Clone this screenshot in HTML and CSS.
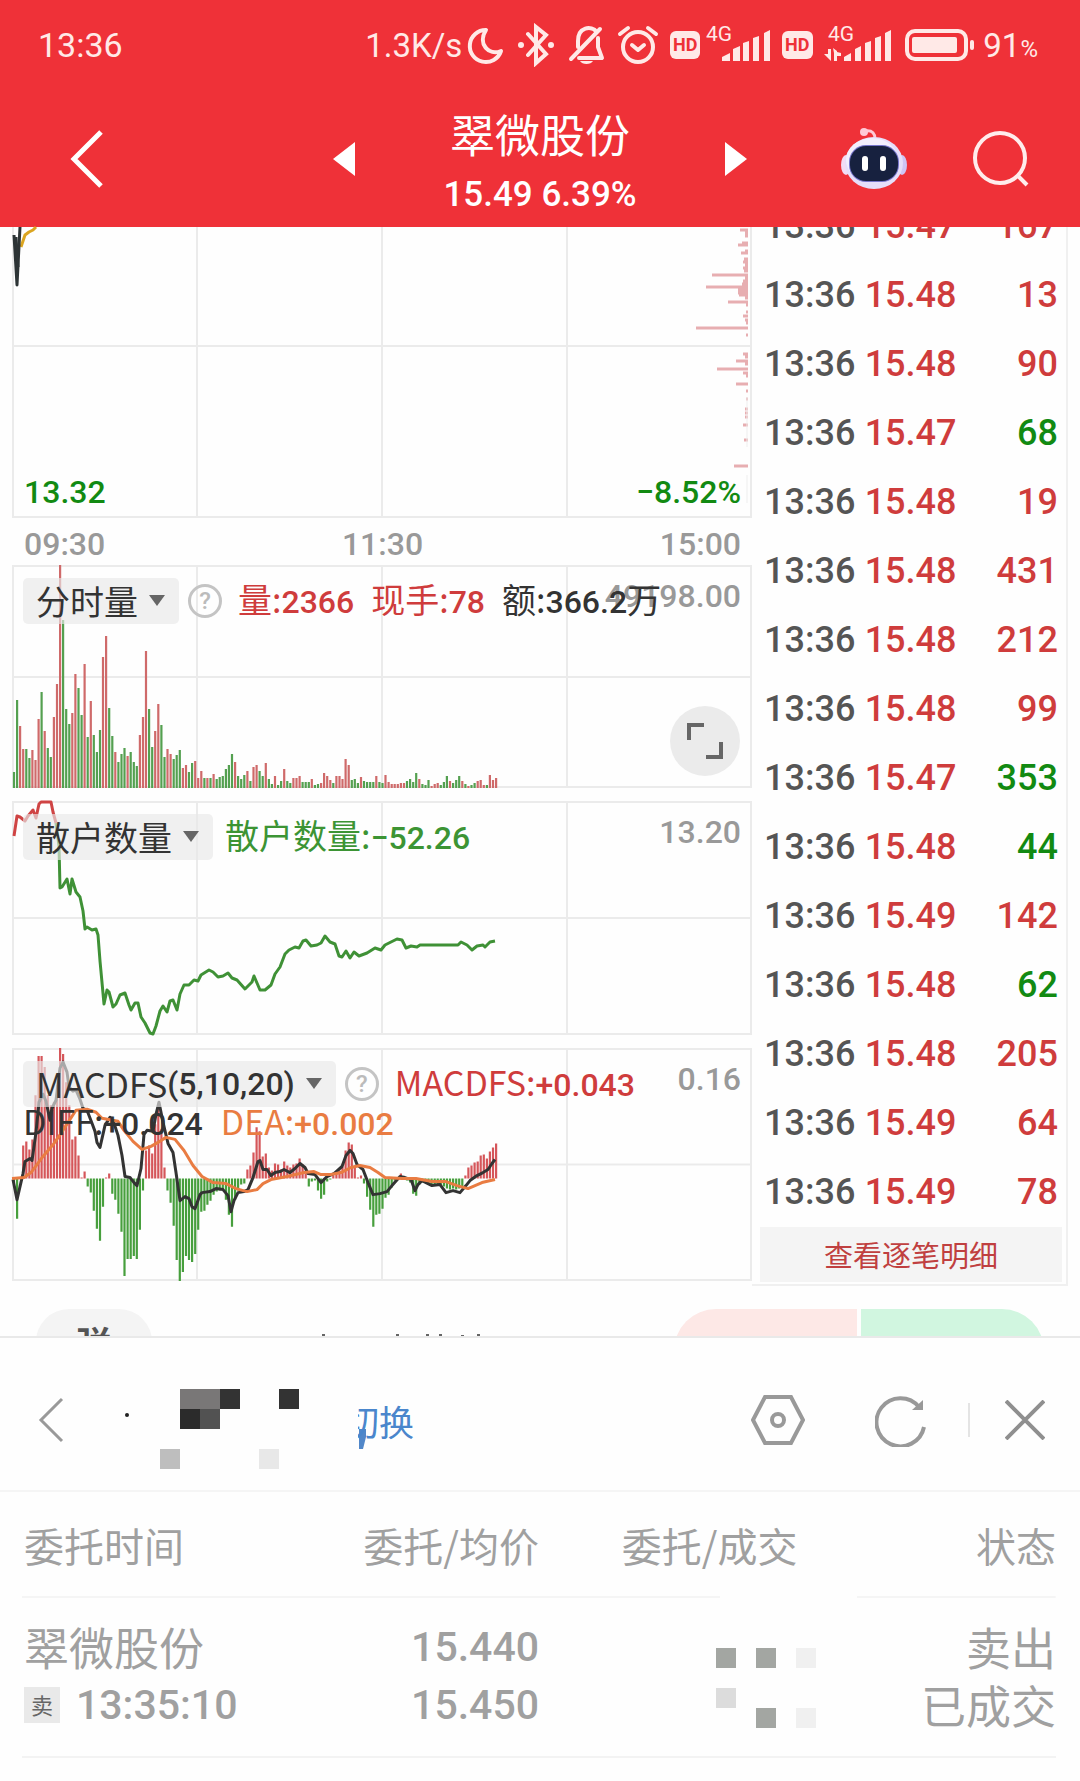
FILE: index.html
```html
<!DOCTYPE html>
<html lang="zh-CN">
<head>
<meta charset="utf-8">
<meta name="viewport" content="width=device-width, initial-scale=1">
<title>翠微股份</title>
<link rel="stylesheet" href="styles.css">
</head>
<body>
<header class="top">
  <div class="status">
    <span class="clock">13:36</span>
    <span class="speed">1.3K/s</span>
    <svg class="status-icons" width="440" height="44" viewBox="468 22 440 44" fill="none" stroke="#ffe9e7" stroke-width="4" stroke-linejoin="round" stroke-linecap="round" aria-hidden="true">
      <path d="M488 29a16 16 0 1 0 15 21c-12 5-24-7-15-21z"/>
      <path d="M530 33l18 20-10 9V26l10 8-18 20" stroke-linejoin="miter"/>
      <circle cx="523" cy="44" r="3" fill="#ffe9e7" stroke="none"/><circle cx="553" cy="44" r="3" fill="#ffe9e7" stroke="none"/>
      <path d="M573 58L602 28M580 46v-6c0-14 13-16 19-9M600 37v9l4 11h-23"/>
      <path d="M582 60h13c-2 4-11 4-13 0z" fill="#ffe9e7" stroke="none"/>
      <circle cx="640" cy="46" r="15"/><path d="M634 44l6 5 6-5M622 33l8-6M658 33l-8-6"/>
      <g fill="#ffe9e7" stroke="none">
        <rect x="672" y="30" width="30" height="28" rx="6"/><rect x="784" y="30" width="31" height="28" rx="6"/>
        <path d="M724 60v-4l8-4v8zM735 48l7-3v15h-7zM745 42l6-2v20h-6zM755 37l6-2v25h-6zM766 32l6-3v31h-6z"/>
        <path d="M846 60v-4l7-4v8zM857 48l6-3v15h-6zM867 42l6-2v20h-6zM877 37l6-2v25h-6zM887 32l6-3v31h-6z"/>
        <path d="M826 53h4v-5h3v12zM835 47l4 3v10h-3V52zM839 51l4 1v3h-4z"/>
      </g>
      <g stroke="none" class="tag-text"><text x="675" y="50" fill="#ee3138">HD</text><text x="787" y="50" fill="#ee3138">HD</text></g>
      <g stroke="none" class="net-text" fill="#ffe9e7"><text x="708" y="40">4G</text><text x="830" y="40">4G</text></g>
    </svg>
    <svg width="70" height="32" viewBox="0 0 70 32" aria-hidden="true"><rect x="2" y="2" width="59" height="28" rx="8" fill="none" stroke="#ffe9e7" stroke-width="4"/><rect x="7" y="8" width="45" height="16" rx="2" fill="#ffe9e7"/><rect x="65" y="11" width="4" height="10" rx="2" fill="#ffe9e7"/></svg>
    <span class="battery">91<small>%</small></span>
  </div>
  <nav class="titlebar">
    <button class="icon-btn back" aria-label="返回"><svg width="36" height="60" viewBox="0 0 36 60"><path d="M32 3L5 30l27 27" fill="none" stroke="#fff" stroke-width="5"/></svg></button>
    <div class="stock">
      <button class="icon-btn" aria-label="上一只"><svg width="22" height="34" viewBox="0 0 22 34"><path d="M22 0v34L0 17z" fill="#fff"/></svg></button>
      <div class="stock-name"><h1>翠微股份</h1><p class="num">15.49 6.39%</p></div>
      <button class="icon-btn" aria-label="下一只"><svg width="22" height="34" viewBox="0 0 22 34"><path d="M0 0v34l22-17z" fill="#fff"/></svg></button>
    </div>
    <div class="tools">
      <button class="icon-btn" aria-label="智能助手"><svg width="68" height="64" viewBox="0 0 68 64">
        <path d="M25 4c8-1 10 3 10 8" fill="none" stroke="#ffc9d6" stroke-width="3"/><circle cx="24" cy="5" r="4" fill="#ffc9d6"/>
        <ellipse cx="6" cy="38" rx="5" ry="10" fill="#f3dcf4"/><ellipse cx="62" cy="38" rx="5" ry="10" fill="#cfc4f5"/>
        <ellipse cx="34" cy="36" rx="29" ry="26" fill="#e6defa"/><ellipse cx="32" cy="33" rx="26" ry="22" fill="#f3effd"/>
        <rect x="9" y="18" width="50" height="37" rx="17" fill="#7473c9"/><rect x="10" y="19" width="48" height="35" rx="16" fill="#17213f"/>
        <rect x="22" y="29" width="6" height="15" rx="3" fill="#fff"/><rect x="40" y="29" width="6" height="15" rx="3" fill="#fff"/></svg></button>
      <button class="icon-btn" aria-label="搜索"><svg width="58" height="58" viewBox="0 0 58 58" fill="none" stroke="#ffecec" stroke-width="4"><circle cx="28" cy="28" r="25"/><path d="M45 45l10 10"/></svg></button>
    </div>
  </nav>
</header>

<main class="market">
  <section class="charts" aria-label="分时图">
    <div class="panel price-panel">
      <svg class="plot" id="price" viewBox="0 0 740 291" preserveAspectRatio="none"></svg>
      <div class="range num"><span>13.32</span><span>−8.52%</span></div>
    </div>
    <div class="axis num"><span>09:30</span><span>11:30</span><span>15:00</span></div>
    <div class="panel volume-panel">
      <svg class="plot" id="volume" viewBox="0 0 740 223" preserveAspectRatio="none"></svg>
      <span class="scale num">49198.00</span>
      <div class="legend">
        <button class="picker">分时量<i class="caret"></i></button>
        <button class="help" aria-label="说明">?</button>
        <span class="reads"><span class="up">量:<b>2366</b></span><span class="up">现手:<b>78</b></span><span>额:<b>366.2</b>万</span></span>
      </div>
      <button class="expand" aria-label="全屏"><svg width="36" height="36" viewBox="0 0 36 36" fill="none" stroke="#666" stroke-width="4"><path d="M2 17V2h15M34 19v15H19"/></svg></button>
    </div>
    <div class="panel retail-panel">
      <svg class="plot" id="retail" viewBox="0 0 740 234" preserveAspectRatio="none"></svg>
      <span class="scale num">13.20</span>
      <div class="legend">
        <button class="picker">散户数量<i class="caret"></i></button>
        <span class="down">散户数量:<b>−52.26</b></span>
      </div>
    </div>
    <div class="panel macd-panel">
      <svg class="plot" id="macd" viewBox="0 0 740 232" preserveAspectRatio="none"></svg>
      <span class="scale num">0.16</span>
      <div class="legend">
        <button class="picker">MACDFS<b>(5,10,20)</b><i class="caret"></i></button>
        <button class="help" aria-label="说明">?</button>
        <span class="up">MACDFS:<b>+0.043</b></span>
        <span class="second"><span>DIFF:<b>+0.024</b></span><span class="dea">DEA:<b>+0.002</b></span></span>
      </div>
    </div>
  </section>

  <section class="ticks" aria-label="成交明细">
    <div class="tick-window">
    <table class="num">
      <tr><td>13:36</td><td>15.47</td><td class="up">167</td></tr>
      <tr><td>13:36</td><td>15.48</td><td class="up">13</td></tr>
      <tr><td>13:36</td><td>15.48</td><td class="up">90</td></tr>
      <tr><td>13:36</td><td>15.47</td><td class="down">68</td></tr>
      <tr><td>13:36</td><td>15.48</td><td class="up">19</td></tr>
      <tr><td>13:36</td><td>15.48</td><td class="up">431</td></tr>
      <tr><td>13:36</td><td>15.48</td><td class="up">212</td></tr>
      <tr><td>13:36</td><td>15.48</td><td class="up">99</td></tr>
      <tr><td>13:36</td><td>15.47</td><td class="down">353</td></tr>
      <tr><td>13:36</td><td>15.48</td><td class="down">44</td></tr>
      <tr><td>13:36</td><td>15.49</td><td class="up">142</td></tr>
      <tr><td>13:36</td><td>15.48</td><td class="down">62</td></tr>
      <tr><td>13:36</td><td>15.48</td><td class="up">205</td></tr>
      <tr><td>13:36</td><td>15.49</td><td class="up">64</td></tr>
      <tr><td>13:36</td><td>15.49</td><td class="up">78</td></tr>
    </table>
    </div>
    <a class="more" href="#ticks">查看逐笔明细</a>
  </section>
</main>

<div class="chat">
  <button class="danmu">弹</button>
  <svg class="hint" width="170" height="4" viewBox="0 0 170 4" fill="#666" aria-hidden="true"><path d="M8 2h3v2H8zM82 2h3v2h-3zM112 2h3v2h-3zM125 2h3v2h-3zM147 3h3v1h-3zM163 2h3v2h-3z"/></svg>
  <div class="vote"><button class="bull" aria-label="看涨"></button><button class="bear" aria-label="看跌"></button></div>
</div>

<section class="sheet">
  <div class="sheet-bar">
    <button class="icon-btn" aria-label="返回"><svg width="26" height="46" viewBox="0 0 26 46"><path d="M24 2L3 23l21 21" fill="none" stroke="#999" stroke-width="3"/></svg></button>
    <svg class="masked" width="246" height="80" viewBox="0 0 246 80" aria-hidden="true">
      <circle cx="6" cy="26" r="2" fill="#222"/>
      <path d="M59 0h40v20H59z" fill="#797777"/><path d="M99 0h20v20H99zM158 0h20v20h-20z" fill="#333"/>
      <path d="M59 20h20v20H59z" fill="#2b2b2b"/><path d="M79 20h20v20H79z" fill="#525252"/>
      <path d="M39 60h20v20H39z" fill="#bebebe"/><path d="M138 60h20v20h-20z" fill="#e8e8e8"/>
      <path d="M238 40h7v8l-3 12h-4z" fill="#5187c9"/>
    </svg>
    <button class="switch" aria-label="切换"><span>切换</span></button>
    <div class="sheet-tools">
      <button class="icon-btn" aria-label="设置"><svg width="54" height="50" viewBox="0 0 54 50" fill="none" stroke="#999" stroke-width="4"><path d="M14 2h26l12 23-12 23H14L2 25z"/><circle cx="27" cy="25" r="6"/></svg></button>
      <button class="icon-btn refresh" aria-label="刷新"><svg width="52" height="54" viewBox="0 0 52 54"><path d="M44 14A24 24 0 1 0 49 34" fill="none" stroke="#999" stroke-width="4"/><path d="M37 17l11-10v10z" fill="#999"/></svg></button>
      <span class="divider"></span>
      <button class="icon-btn" aria-label="关闭"><svg width="40" height="40" viewBox="0 0 40 40"><path d="M1 1l38 38M39 1L1 39" stroke="#8f8f8f" stroke-width="4"/></svg></button>
    </div>
  </div>
  <table class="orders">
    <thead><tr><th>委托时间</th><th>委托/均价</th><th class="fade-out">委托/成交</th><th class="fade-in">状态</th></tr></thead>
    <tbody><tr>
      <td>翠微股份<br><span class="when"><span class="side">卖</span><span class="num">13:35:10</span></span></td>
      <td class="num">15.440<br>15.450</td>
      <td><svg class="masked-qty" width="100" height="80" viewBox="0 0 100 80" aria-hidden="true"><path d="M0 0h20v20H0zM40 0h20v20H40zM40 60h20v20H40z" fill="#a3a6a2"/><path d="M0 40h20v20H0z" fill="#dcdcdc"/><path d="M80 0h20v20H80zM80 60h20v20H80z" fill="#f0f0f0"/></svg></td>
      <td>卖出<br>已成交</td>
    </tr></tbody>
  </table>
</section>
<script src="chart.js"></script>
</body>
</html>
```
FILE: styles.css
```css
* { box-sizing: border-box; }
body { margin: 0; min-height: 100vh; background: #fefefe; color: #333; font-family: "Noto Sans CJK SC", sans-serif; font-size: 34px; }
button { font: inherit; color: inherit; border: 0; padding: 0; background: none; }
h1, p { margin: 0; font-weight: 400; }
svg { display: block; }
.num, b { font-family: Roboto, sans-serif; font-weight: 500; }
.up { color: #cf3c3c; }
.down { color: #128a12; }
.icon-btn { display: grid; place-items: center; }

.top { background: #ef3138; color: #fff; height: 227px; }
.status { display: flex; align-items: center; height: 90px; padding: 0 42px 0 38px; color: #ffe9e7; font-family: Roboto, sans-serif; }
.speed { margin-left: auto; font-size: 33px; }
.status-icons { margin-left: 4px; margin-right: -1px; }
.tag-text { font: 700 18px Roboto, sans-serif; }
.net-text { font: 400 21px Roboto, sans-serif; }
.battery { margin-left: 8px; font-size: 33px; }
.battery small { font-size: 24px; }
.titlebar { display: grid; grid-template-columns: 1fr auto 1fr; align-items: center; height: 137px; }
.back { justify-self: start; margin-left: 69px; }
.stock { display: flex; align-items: center; gap: 88px; }
.stock-name { padding-top: 8px; text-align: center; }
.stock h1 { font-size: 45px; line-height: 64px; }
.stock p { font-size: 35px; line-height: 58px; }
.tools { display: flex; justify-content: flex-end; align-items: center; gap: 64px; padding-right: 50px; }

.market { display: grid; grid-template-columns: minmax(0, 1fr) 316px; padding: 0 12px; }
.charts { display: flex; flex-direction: column; }
.panel { display: grid; }
.panel > * { grid-area: 1 / 1; }
.plot { width: 100%; height: 100%; overflow: visible; }
.price-panel { height: 291px; }
.volume-panel { height: 223px; }
.retail-panel { height: 234px; margin: 13px 0; }
.macd-panel { height: 233px; }
.range { align-self: end; display: flex; justify-content: space-between; padding: 0 11px 7px 12px; font-size: 32px; line-height: 38px; color: #128a12; }
.axis { display: grid; grid-template-columns: 1fr 1fr 1fr; height: 47px; padding: 0 11px 0 12px; line-height: 52px; font-size: 32px; color: #999; }
.axis span:nth-child(2) { text-align: center; }
.axis span:nth-child(3) { text-align: right; }
.scale { justify-self: end; padding: 11px 11px 0 0; font-size: 32px; line-height: 40px; color: #999; }
.legend { display: flex; flex-wrap: wrap; align-items: center; align-content: flex-start; padding: 12px 0 0 11px; line-height: 44px; color: #333; }
.picker { display: flex; align-items: center; height: 46px; padding: 0 14px 0 13px; border-radius: 5px; background: rgba(232, 232, 232, .65); }
.caret { margin-left: 11px; border: 8px solid transparent; border-top: 11px solid #666; border-bottom: 0; }
.help { width: 34px; height: 34px; margin: 0 16px 0 9px; border: 3px solid #c4c4c4; border-radius: 50%; font: 500 24px/28px Roboto, sans-serif; color: #bbb; }
.legend b { font-size: 32px; }
.reads { display: flex; gap: 17px; }
.legend .down { margin-left: 12px; color: #3c9434; }
.second { flex-basis: 100%; display: flex; gap: 18px; line-height: 28px; }
.dea { color: #e97c42; }
.expand { align-self: end; justify-self: end; display: grid; place-items: center; width: 70px; height: 70px; margin: 0 12px 12px 0; border-radius: 50%; background: #ebebeb; }

.ticks { border-right: 2px solid #f0f0f0; border-bottom: 2px solid #f0f0f0; padding: 0 4px 2px 8px; }
.tick-window { overflow: hidden; }
.ticks table { width: 100%; margin-top: -35px; border-collapse: collapse; table-layout: fixed; font-size: 36px; color: #555; }
.ticks td { height: 69px; padding: 0 0 0 4px; line-height: 69px; }
.ticks td:nth-child(2) { color: #cf3c3c; }
.ticks td:nth-child(3) { text-align: right; padding-right: 4px; }
.more { display: block; line-height: 55px; background: #f4f4f4; text-align: center; text-decoration: none; font-size: 29px; color: #c04040; }

.chat { display: flex; align-items: flex-start; height: 50px; padding: 23px 36px 0; overflow: hidden; }
.danmu { width: 116px; height: 66px; border-radius: 50px; background: #f4f4f4; color: #555; font-size: 36px; line-height: 66px; font-weight: 700; }
.hint { margin: 23px auto 0 162px; }
.vote { display: flex; gap: 4px; width: 370px; }
.vote button { height: 84px; }
.bull { flex: 1; background: #fde8e6; border-radius: 42px 0 0 42px; }
.bear { flex: 1; background: #d1f6e0; border-radius: 0 42px 42px 0; }

.sheet { border-top: 2px solid #e9e9e9; background: #fefefe; }
.sheet-bar { display: flex; align-items: center; height: 154px; padding: 12px 35px 0 38px; border-bottom: 2px solid #f5f5f5; }
.masked { margin: 18px 0 0 57px; }
.switch { display: flex; justify-content: flex-end; width: 56px; margin-left: -9px; overflow: hidden; color: #4a86cc; font-size: 35px; }
.switch span { flex: none; }
.sheet-tools { display: flex; align-items: center; margin-left: auto; }
.refresh { margin: 0 41px 0 70px; }
.divider { width: 2px; height: 34px; margin-right: 35px; background: #e4e4e4; }
.orders { width: calc(100% - 46px); margin: 0 24px 0 22px; border-collapse: collapse; table-layout: fixed; color: #a0a0a0; text-align: right; }
.orders th { padding: 24px 0; font-size: 40px; font-weight: 400; line-height: 58px; background: linear-gradient(#f5f5f5, #f5f5f5) bottom left / 100% 2px no-repeat; }
.orders th:first-child, .orders td:first-child { text-align: left; padding-left: 2px; }
.orders .fade-out { background-size: 70% 2px; }
.orders .fade-in { background-size: 77% 2px; background-position: bottom right; }
.orders td { padding: 20px 0 22px; border-bottom: 2px solid #f3f3f3; font-size: 45px; line-height: 58px; vertical-align: bottom; }
.orders td.num, .orders td .num { font-size: 41px; }
.when { display: flex; align-items: center; gap: 16px; }
.side { width: 36px; height: 36px; background: #e9e9e9; color: #666; font-size: 22px; line-height: 34px; text-align: center; }
.masked-qty { margin: 0 -18px 6px auto; }
```
FILE: chart.js
```js
const NS = 'http://www.w3.org/2000/svg';
const STEP = 740 / 241;

function add(svg, d, stroke, width) {
  const path = document.createElementNS(NS, 'path');
  path.setAttribute('d', d);
  path.setAttribute('fill', 'none');
  path.setAttribute('stroke', stroke);
  path.setAttribute('stroke-width', width);
  path.setAttribute('stroke-linejoin', 'round');
  svg.append(path);
}

function grid(svg, height, middle) {
  add(svg, `M1 0V${height}M185 0V${height}M370 0V${height}M555 0V${height}M739 0V${height}M0 ${middle}H740M0 ${height - 1}H740`, '#ebebeb', 2);
}

// Points are listed as x, y pairs.
function line(svg, points, stroke) {
  let d = '';
  for (let i = 0; i < points.length; i += 2) d += (i ? 'L' : 'M') + points[i] + ' ' + points[i + 1];
  add(svg, d, stroke, 3);
}

// Positive values are buys, negative values are sells.
function bars(svg, values, draw, red, green) {
  let up = '', down = '';
  values.forEach((v, i) => {
    const d = `M${(2 + i * STEP).toFixed(1)} ${draw(v)}`;
    if (v > 0) up += d; else down += d;
  });
  add(svg, up, red, 2.2);
  add(svg, down, green, 2.2);
}

const price = document.getElementById('price');
grid(price, 291, 119);
line(price, [9, 20, 13, 8, 17, 5, 21, 3, 24, 0], '#dba520');
line(price, [2, 8, 5, 58, 8, 0], '#2d3436');
line(price, [4, 10, 6, 40], '#2d3436');
const depth = [[3,8],[6,3],[9,3],[16,6],[18,10],[24,3],[26,7],[32,4],[35,5],[38,3],[41,5],[44,4],[48,36],[51,3],[54,5],[57,6],[60,42],[63,10],[66,10],[68,9],[71,3],[75,20],[78,2],[85,2],[89,5],[93,3],[96,2],[101,52],[108,2],[127,5],[130,3],[134,12],[137,3],[142,31],[146,5],[149,2],[157,12],[164,2],[172,2],[182,3],[186,3],[190,3],[198,5],[213,4],[239,14]];
add(price, depth.map(([y, w]) => `M736 ${y}h${-w}`).join(''), '#e7aeb1', 3);
add(price, 'M735 170v50M735 248v28', '#eee', 1);

const volume = document.getElementById('volume');
grid(volume, 223, 112);
add(volume, 'M0 1H740', '#ebebeb', 2);
bars(volume, [-16,-88,62,39,-39,-30,38,28,69,-96,57,-40,-31,71,104,223,-168,-79,-64,75,114,-100,-73,124,-51,87,-53,-36,-58,131,152,-80,-52,36,-26,-34,-40,32,-36,-26,-22,53,71,137,-79,-41,57,84,-63,-31,39,34,-29,-33,-38,20,23,-16,-25,27,10,17,-10,10,-10,14,-9,-11,-12,-19,-23,-34,26,-12,-9,-13,17,-7,21,23,-17,-12,25,-9,-4,12,-3,-7,19,-7,-5,10,10,12,-6,-6,-6,9,-3,-4,5,15,12,8,-5,12,12,9,29,23,-8,-9,-5,11,-7,-6,-6,-6,12,-6,-5,13,6,4,4,4,5,5,-7,-9,-6,-15,9,-4,-3,-8,2,4,5,-3,-6,-12,7,-5,-8,-12,7,-4,2,-3,-5,7,8,3,-3,13,8,10],
  v => `223v${-Math.abs(v)}`, '#cf6a6a', '#54a050');

const retail = document.getElementById('retail');
grid(retail, 234, 117);
add(retail, 'M0 1H740', '#ebebeb', 2);
line(retail, [2,35,5,15,8,16,13,20,16,15,21,9,24,17,27,3,29,1,39,1,41,11,44,22], '#cf4444');
line(retail, [44,22,47,45,48,87,50,86,55,78,58,93,60,78,64,91,68,96,71,110,73,128,75,126,80,129,84,128,86,134,88,160,92,203,95,189,97,191,101,206,104,203,108,194,113,192,117,204,119,209,123,202,126,202,129,216,133,222,138,232,141,233,144,225,148,210,151,205,155,211,158,200,161,199,165,209,168,193,172,184,177,184,182,179,186,180,189,174,197,169,201,171,206,176,211,175,216,172,220,177,225,179,233,188,240,181,242,175,245,182,248,189,253,189,259,184,263,173,268,166,273,153,277,149,283,146,287,147,291,140,294,139,299,145,305,144,309,142,313,135,318,141,323,143,327,155,330,156,334,150,338,157,342,151,347,155,355,152,363,147,369,149,373,144,385,138,390,139,394,147,399,145,405,146,408,144,446,144,449,141,455,144,460,149,465,145,471,144,473,146,478,141,483,140], '#3f9136');

// Histogram heights are measured from the zero line at y = 130.
const macd = document.getElementById('macd');
grid(macd, 232, 116);
add(macd, 'M0 1H740', '#ebebeb', 2);
bars(macd, [-4,-40,1,33,37,29,39,83,122,122,111,83,73,76,93,130,124,96,73,39,42,23,1,7,-8,-14,-32,-50,-62,-28,1,5,-15,-21,-35,-53,-97,-80,-80,-77,-80,-51,-12,28,33,25,54,74,49,11,-12,-24,-47,-81,-102,-93,-77,-81,-83,-75,-51,-33,-32,-26,-22,-16,-13,-12,-11,-21,-36,-48,-21,-12,-6,-5,9,13,26,51,47,22,25,11,8,15,14,9,17,13,11,14,15,20,14,5,-8,-3,-2,-12,-20,-16,-3,-1,3,5,8,12,28,36,34,13,1,3,-5,-18,-31,-48,-36,-35,-30,-19,-16,-9,-2,1,5,2,-2,-4,-15,-17,-6,-4,-4,-6,-7,-7,-6,-7,-8,-10,-11,-10,-11,-10,-8,3,11,13,16,17,23,24,20,27,31,35],
  v => `130v${-v}`, '#d5565a', '#479f3d');
line(macd, [1,131,5,151,11,125,13,113,18,110,20,112,24,84,27,54,31,46,34,53,38,72,40,60,44,52,48,20,51,14,55,24,57,39,61,43,64,42,68,51,71,60,75,62,80,75,83,83,85,94,88,99,93,77,98,69,102,75,106,87,110,107,113,128,118,129,122,134,125,137,129,120,132,86,135,82,141,83,144,66,147,54,151,74,156,95,161,104,164,124,168,152,173,148,177,150,180,158,183,160,188,146,190,144,198,143,204,140,211,141,216,147,219,163,222,152,226,144,232,143,236,141,241,129,246,113,248,112,251,121,255,121,259,127,263,124,268,123,272,121,278,124,283,120,288,115,293,119,296,125,303,126,309,134,315,128,322,125,330,118,334,107,338,102,341,105,345,116,351,121,356,134,361,146,368,145,375,143,380,137,388,128,393,129,399,131,403,142,406,136,410,132,414,134,420,137,428,136,434,144,441,142,448,144,454,137,458,132,465,127,471,124,476,121,480,115,483,111], '#333');
line(macd, [0,130,12,129,19,124,31,108,42,95,49,85,56,74,64,62,75,61,84,64,90,70,106,73,112,82,121,93,130,101,139,98,146,94,154,89,163,91,172,102,181,117,190,128,201,134,214,135,224,140,235,143,245,141,251,135,259,131,275,128,292,124,302,123,309,126,319,126,329,124,339,119,348,117,358,119,366,124,373,129,390,130,404,130,420,133,434,133,445,137,456,140,463,137,470,134,483,131], '#e97c42');
```
